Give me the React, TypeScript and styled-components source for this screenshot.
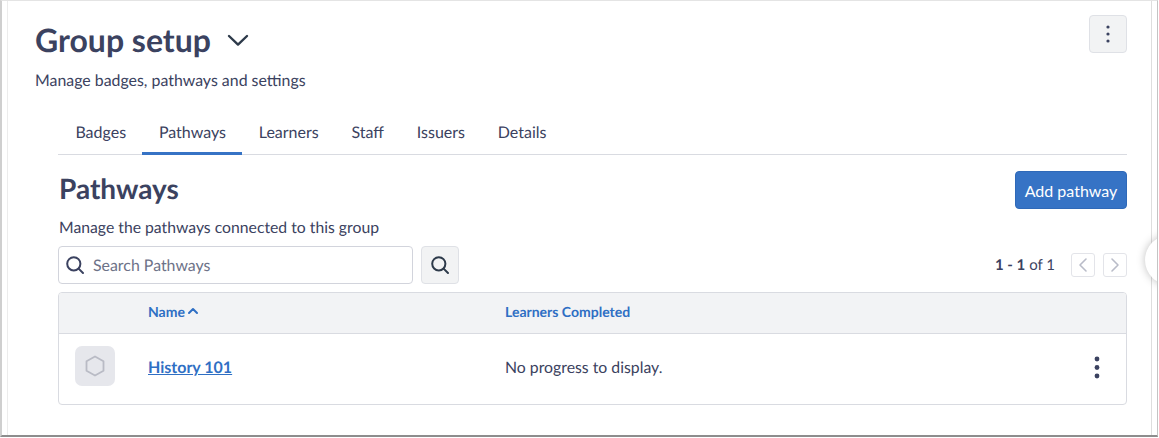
import React from "react";
import styled, { createGlobalStyle } from "styled-components";

const Global = createGlobalStyle`
  html, body { margin: 0; padding: 0; background: #fff; }
  body { font-family: Lato, "Noto Sans", sans-serif; color: #3b4260; text-rendering: geometricPrecision; }
  * { box-sizing: border-box; }
`;

const Shot = styled.div`
  width: 1159px;
  height: 438px;
  background: #fff;
  overflow: hidden;
`;
const Frame = styled.div`
  position: relative;
  width: 1158px;
  height: 437px;
  border-top: 1px solid #e4e4e4;
  border-left: 2px solid #cfcfcf;
  border-right: 1px solid #c4c4c4;
  border-bottom: 2px solid #8d8d8d;
  overflow: hidden;
`;
const Inner = styled.div`
  height: 100%;
  margin-left: 5px;
  margin-right: 5px;
  border-left: 1px solid #ececec;
  border-right: 1px solid #dedede;
  padding: 14px 24px 0 26px;
`;
const Header = styled.header`
  display: flex;
  justify-content: space-between;
  align-items: flex-start;
  height: 100px;
`;
const TitleRow = styled.div`
  display: flex;
  align-items: center;
  gap: 16px;
  height: 50px;
  padding-left: 1px;
`;
const Title = styled.h1`
  margin: 0;
  font-size: 32px;
  line-height: 50px;
  font-weight: 700;
  color: #3b4260;
`;
const Subtitle = styled.p`
  margin: 6px 0 0 1px;
  font-size: 15.9px;
  line-height: 20px;
  color: #3b4260;
`;
const MenuButton = styled.button`
  width: 38px;
  height: 38px;
  padding: 0;
  display: flex;
  align-items: center;
  justify-content: center;
  background: #f2f3f4;
  border: 1px solid #dfe1e6;
  border-radius: 4px;
`;
const Section = styled.section`
  margin-left: 24px;
`;
const Tabs = styled.nav`
  display: flex;
  height: 40px;
  padding-left: 1px;
  border-bottom: 1px solid #d9dbe1;
`;
const Tab = styled.div<{ $active?: boolean }>`
  height: 40px;
  padding: 8px 16.4px 0;
  font-size: 16px;
  line-height: 20px;
  color: #3b4260;
  border-bottom: 3px solid ${(p) => (p.$active ? "#3673c5" : "transparent")};
`;
const SectionHead = styled.div`
  display: flex;
  justify-content: space-between;
  align-items: flex-start;
  padding-top: 16px;
`;
const SectionTitle = styled.h2`
  margin: -2px 0 0 1px;
  font-size: 28px;
  line-height: 38px;
  font-weight: 700;
  color: #3b4260;
`;
const AddButton = styled.button`
  width: 112px;
  height: 38px;
  padding: 0;
  font-family: inherit;
  font-size: 16px;
  color: #fff;
  background: #3673c5;
  border: 1px solid #2f69b8;
  border-radius: 4px;
`;
const SectionSub = styled.p`
  margin: 9px 0 0 1px;
  font-size: 15.75px;
  line-height: 20px;
  color: #3b4260;
`;
const Toolbar = styled.div`
  display: flex;
  align-items: center;
  margin-top: 8px;
  height: 38px;
`;
const SearchBox = styled.div`
  width: 355px;
  height: 38px;
  display: flex;
  align-items: center;
  gap: 8px;
  padding-left: 6px;
  border: 1px solid #d2d4dc;
  border-radius: 4px;
  background: #fff;
`;
const Placeholder = styled.span`
  font-size: 15.9px;
  color: #6d7288;
`;
const SearchButton = styled.button`
  width: 38px;
  height: 38px;
  margin-left: 8px;
  padding: 0;
  display: flex;
  align-items: center;
  justify-content: center;
  background: #f2f3f4;
  border: 1px solid #dfe1e6;
  border-radius: 4px;
`;
const Pager = styled.div`
  margin-left: auto;
  display: flex;
  align-items: center;
  font-size: 15px;
  color: #3b4260;
`;
const PagerText = styled.span`
  margin-right: 16px;
  b { font-weight: 700; }
`;
const PageBtn = styled.button`
  width: 24px;
  height: 24px;
  padding: 0;
  margin-left: 8px;
  display: flex;
  align-items: center;
  justify-content: center;
  background: #fff;
  border: 1px solid #e3e4e9;
  border-radius: 3px;
  &:first-of-type { margin-left: 0; }
`;
const Table = styled.div`
  margin-top: 8px;
  height: 113px;
  border: 1px solid #d9dbe1;
  border-radius: 4px;
  overflow: hidden;
`;
const HeadRow = styled.div`
  display: grid;
  grid-template-columns: 89px 357px 1fr;
  align-items: center;
  height: 41px;
  padding-bottom: 4px;
  background: #f2f3f5;
  border-bottom: 1px solid #d9dbe1;
`;
const HeadCell = styled.div`
  display: flex;
  align-items: center;
  gap: 2px;
  font-size: 14px;
  font-weight: 700;
  color: #2f6fc4;
`;
const BodyRow = styled.div`
  display: grid;
  grid-template-columns: 89px 357px 1fr 58px;
  align-items: center;
  height: 70px;
  padding-bottom: 4px;
`;
const BadgeCell = styled.div`
  padding-left: 16px;
  margin-top: -2px;
  display: flex;
`;
const BadgeTile = styled.div`
  width: 40px;
  height: 40px;
  display: flex;
  align-items: center;
  justify-content: center;
  background: #e6e7ec;
  border-radius: 7px;
`;
const PathLink = styled.a`
  font-size: 16px;
  font-weight: 700;
  color: #2f6fc4;
  text-decoration: underline;
`;
const BodyText = styled.div`
  font-size: 15.8px;
  color: #3b4260;
`;
const RowMenu = styled.div`
  display: flex;
  justify-content: center;
`;
const EdgeHandle = styled.div`
  position: absolute;
  left: 1143px;
  top: 234px;
  width: 50px;
  height: 50px;
  background: #fff;
  border-radius: 50%;
  box-shadow: 0 0 8px rgba(0, 0, 0, 0.25);
`;

const Dots = ({ color = "#3b4260", gap = 7, r = 1.8 }: { color?: string; gap?: number; r?: number }) => (
  <svg width="8" height={gap * 2 + 8} viewBox={`0 0 8 ${gap * 2 + 8}`}>
    <circle cx="4" cy="4" r={r} fill={color} />
    <circle cx="4" cy={4 + gap} r={r} fill={color} />
    <circle cx="4" cy={4 + gap * 2} r={r} fill={color} />
  </svg>
);
const SearchIcon = ({ color = "#3b4260" }: { color?: string }) => (
  <svg width="20" height="20" viewBox="0 0 20 20" fill="none" stroke={color} strokeWidth="2" strokeLinecap="round">
    <circle cx="8.8" cy="8.8" r="6.6" />
    <path d="M13.6 13.6 18 18" />
  </svg>
);

export default function App() {
  return (
    <Shot>
      <Global />
      <Frame>
        <Inner>
          <Header>
            <div>
              <TitleRow>
                <Title>Group setup</Title>
                <svg width="22" height="14" viewBox="0 0 22 14" fill="none" stroke="#2d3a4a" strokeWidth="2.4" strokeLinecap="round" strokeLinejoin="round">
                  <path d="M2 3l9 8.6L20 3" />
                </svg>
              </TitleRow>
              <Subtitle>Manage badges, pathways and settings</Subtitle>
            </div>
            <MenuButton aria-label="More">
              <Dots gap={7} r={1.6} />
            </MenuButton>
          </Header>
          <Section>
            <Tabs>
              <Tab>Badges</Tab>
              <Tab $active>Pathways</Tab>
              <Tab>Learners</Tab>
              <Tab>Staff</Tab>
              <Tab>Issuers</Tab>
              <Tab>Details</Tab>
            </Tabs>
            <SectionHead>
              <SectionTitle>Pathways</SectionTitle>
              <AddButton>Add pathway</AddButton>
            </SectionHead>
            <SectionSub>Manage the pathways connected to this group</SectionSub>
            <Toolbar>
              <SearchBox>
                <SearchIcon />
                <Placeholder>Search Pathways</Placeholder>
              </SearchBox>
              <SearchButton aria-label="Search">
                <SearchIcon color="#2d3a4a" />
              </SearchButton>
              <Pager>
                <PagerText><b>1 - 1</b> of 1</PagerText>
                <PageBtn aria-label="Previous">
                  <svg width="12" height="16" viewBox="0 0 12 16" fill="none" stroke="#b9bcc8" strokeWidth="1.6" strokeLinecap="round" strokeLinejoin="round"><path d="M9 2 3 8l6 6" /></svg>
                </PageBtn>
                <PageBtn aria-label="Next">
                  <svg width="12" height="16" viewBox="0 0 12 16" fill="none" stroke="#b9bcc8" strokeWidth="1.6" strokeLinecap="round" strokeLinejoin="round"><path d="M3 2l6 6-6 6" /></svg>
                </PageBtn>
              </Pager>
            </Toolbar>
            <Table>
              <HeadRow>
                <span />
                <HeadCell>
                  Name
                  <svg width="12" height="8" viewBox="0 0 12 8" fill="none" stroke="#2f6fc4" strokeWidth="2" strokeLinecap="round" strokeLinejoin="round"><path d="M2 6l4-4 4 4" /></svg>
                </HeadCell>
                <HeadCell>Learners Completed</HeadCell>
              </HeadRow>
              <BodyRow>
                <BadgeCell>
                  <BadgeTile>
                    <svg width="22" height="24" viewBox="0 0 22 24" fill="none" stroke="#b9bbc5" strokeWidth="1.8" strokeLinejoin="round"><path d="M11 2.5 19.5 7.2v9.6L11 21.5 2.5 16.8V7.2Z" /></svg>
                  </BadgeTile>
                </BadgeCell>
                <div><PathLink href="#">History 101</PathLink></div>
                <BodyText>No progress to display.</BodyText>
                <RowMenu><Dots gap={8.5} r={2.4} /></RowMenu>
              </BodyRow>
            </Table>
          </Section>
        </Inner>
        <EdgeHandle />
      </Frame>
    </Shot>
  );
}
